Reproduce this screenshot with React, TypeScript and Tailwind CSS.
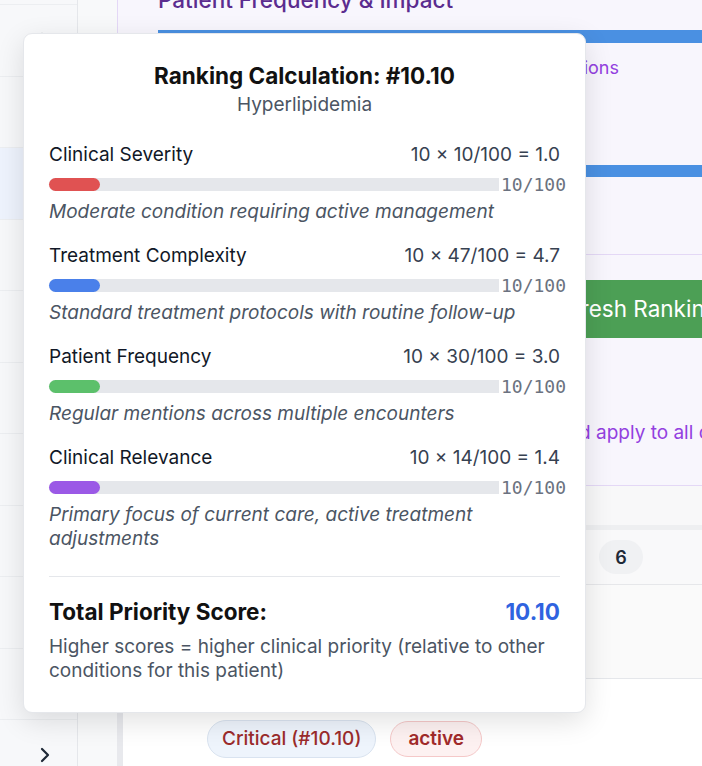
import { ChevronRight } from "lucide-react";

const factors = [
  {
    label: "Clinical Severity",
    formula: "10 × 10/100 = 1.0",
    fill: "bg-[#e05252]",
    desc: "Moderate condition requiring active management",
  },
  {
    label: "Treatment Complexity",
    formula: "10 × 47/100 = 4.7",
    fill: "bg-[#4a80ea]",
    desc: "Standard treatment protocols with routine follow-up",
  },
  {
    label: "Patient Frequency",
    formula: "10 × 30/100 = 3.0",
    fill: "bg-[#5cc06b]",
    desc: "Regular mentions across multiple encounters",
  },
  {
    label: "Clinical Relevance",
    formula: "10 × 14/100 = 1.4",
    fill: "bg-[#9b59e6]",
    desc: "Primary focus of current care, active treatment adjustments",
  },
];

const sidebarRows = Array.from({ length: 12 }, (_, i) => i);

function RankingPopover() {
  return (
    <div className="absolute left-[23px] top-[33px] w-[563px] rounded-[9px] border border-[#e5e7eb] bg-white px-[25px] pb-[29px] pt-[27px] shadow-[0_8px_28px_rgba(0,0,0,0.12)]">
      <h3 className="text-center text-[22.5px] font-bold leading-[30px] text-[#111111]">
        Ranking Calculation: #10.10
      </h3>
      <p className="text-center text-[19px] leading-[27px] text-[#4b5563]">
        Hyperlipidemia
      </p>

      <div className="mt-[24px] flex flex-col gap-[19px]">
        {factors.map((f) => (
          <div key={f.label}>
            <div className="flex h-[27px] items-center justify-between text-[19px]">
              <span className="text-[#111827]">{f.label}</span>
              <span className="text-[#374151]">{f.formula}</span>
            </div>
            <div className="relative mt-[9px] h-[13px] rounded-full bg-[#e5e7eb]">
              <div className={`h-full w-[10%] rounded-full ${f.fill}`} />
              <span className="absolute right-[-6px] top-1/2 -translate-y-1/2 bg-white pl-[2px] font-['DejaVu_Sans_Mono',monospace] text-[18px] leading-[20px] text-[#6b7280]">
                10/100
              </span>
            </div>
            <p className="mt-[9px] text-[19px] italic leading-[24px] text-[#4b5563]">
              {f.desc}
            </p>
          </div>
        ))}
      </div>

      <div className="mt-[25px] border-t border-[#e5e7eb] pt-[20px]">
        <div className="flex items-center justify-between text-[22.5px] font-bold leading-[30px]">
          <span className="text-[#111111]">Total Priority Score:</span>
          <span className="text-[#2f63e0]">10.10</span>
        </div>
        <p className="mt-[8px] text-[19px] leading-[24px] text-[#4b5563]">
          Higher scores = higher clinical priority (relative to other
          conditions for this patient)
        </p>
      </div>
    </div>
  );
}

export default function App() {
  return (
    <div className="relative flex h-[766px] w-[702px] overflow-hidden bg-white font-['Inter',sans-serif]">
      {/* Sidebar */}
      <aside className="w-[78px] shrink-0 border-r border-[#e5e7eb] bg-[#f7f8fa]">
        <div className="-mt-[66.5px]">
          {sidebarRows.map((i) => (
            <div
              key={i}
              className={`flex h-[71.5px] items-center border-b border-[#eceef1] pl-[33px] ${
                i === 3 ? "bg-[#eef3fd]" : ""
              }`}
            >
              <ChevronRight size={24} strokeWidth={2.25} className="text-[#1f2937]" />
            </div>
          ))}
        </div>
      </aside>

      <div className="w-[39px] shrink-0 bg-[#f8f9fa]" />

      {/* Main panel */}
      <main className="flex w-[640px] shrink-0 flex-col">
        <section className="-mt-[22px] h-[508px] border-b border-l border-[#e4d8f6] bg-[#f8f6fd] pl-[40px] pt-[7px]">
          <h2 className="text-[22.5px] font-medium leading-[30px] text-[#5b2c8f]">
            Patient Frequency &amp; Impact
          </h2>
          <div className="mt-[15px] h-[13px] bg-[#4a90e2]" />
          <div className="mt-[13px] flex w-[461px] justify-end">
            <p className="whitespace-nowrap text-[18px] leading-[24px] text-[#9340e0]">
              Weighted by encounters and medications
            </p>
          </div>
          <div className="mt-[85px] h-[12px] bg-[#4a90e2]" />
          <div className="-ml-[40px] mt-[77px] h-px bg-[#e4d8f6]" />
          <button className="mt-[25px] flex h-[58px] w-full items-center bg-[#4c9f55] pl-[387px] text-[22.5px] text-white">
            Refresh Rankings
          </button>
          <p className="mt-[81px] whitespace-nowrap pl-[290px] text-[19px] leading-[27px] text-[#9340e0]">
            Recalculate and apply to all conditions
          </p>
        </section>

        <div className="flex flex-1 flex-col border-l-[6px] border-[#e8e9ed]">
          <div className="h-[39px] bg-[#f8f8f9]" />
          <div className="h-[5px] bg-[#eeeff1]" />
          <div className="flex h-[55px] items-center border-b border-[#e6e7ea] bg-[#f9f9fa] pl-[476px]">
            <span className="flex h-[34px] w-[44px] items-center justify-center rounded-full bg-[#f0f1f3] text-[18px] font-semibold text-[#1f2937]">
              6
            </span>
          </div>
          <div className="h-[94px] border-b border-[#e5e7eb] bg-[#fafafa]" />
          <div className="flex items-center gap-[14px] pl-[84px] pt-[41px]">
            <span className="flex h-[38px] items-center rounded-full border border-[#d9e3f0] bg-[#eef4fc] px-[14px] text-[19px] font-medium text-[#9b2c2c]">
              Critical (#10.10)
            </span>
            <span className="flex h-[36px] items-center rounded-full border border-[#f5c8c8] bg-[#fdf1f1] px-[17px] text-[19px] font-semibold text-[#a12a2a]">
              active
            </span>
          </div>
        </div>
      </main>

      <RankingPopover />
    </div>
  );
}
